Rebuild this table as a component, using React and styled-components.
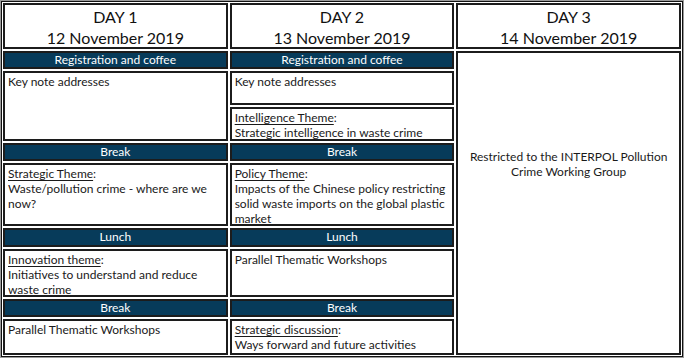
import React from "react";
import styled, { createGlobalStyle } from "styled-components";

const GlobalStyle = createGlobalStyle`
  html, body {
    margin: 0;
    padding: 0;
    background: #ffffff;
  }
  body {
    font-family: Lato, "Open Sans", "Liberation Sans", sans-serif;
    color: #1a1a1a;
  }
`;

const Frame = styled.div`
  width: 684px;
  height: 358px;
  box-sizing: border-box;
  border: 1px solid #9a9a9a;
`;

const Table = styled.div`
  height: 100%;
  box-sizing: border-box;
  border: 1px solid #111;
  padding: 1px;
  display: grid;
  grid-template-columns: 1fr 1fr 1fr;
  grid-template-rows: 46px 18px 34px 34px 18px 63px 19px 48px 18px 36px;
  gap: 2px;
`;

const Cell = styled.div`
  box-sizing: border-box;
  border: 2px solid #1c1c1c;
  background: #fff;
  font-size: 12px;
  line-height: 15px;
  padding: 1px 3px 0;
  overflow: hidden;
  grid-column: ${(p) => p.$col};
  grid-row: ${(p) => p.$row};
`;

const Header = styled(Cell)`
  text-align: center;
  font-size: 16px;
  line-height: 21px;
  color: #111;
`;

const Bar = styled(Cell)`
  background: #073b5a;
  color: #fff;
  text-align: center;
  font-size: 12px;
  line-height: 14px;
  padding: 0 4px;
`;

const Restricted = styled(Cell)`
  text-align: center;
  padding-top: 96px;
`;

const Label = styled.span`
  text-decoration: underline;
  text-underline-offset: 2px;
`;

const days = [
  { col: 1, day: "DAY 1", date: "12 November 2019" },
  { col: 2, day: "DAY 2", date: "13 November 2019" },
  { col: 3, day: "DAY 3", date: "14 November 2019" },
];

export default function App() {
  return (
    <>
      <GlobalStyle />
      <Frame>
        <Table>
          {days.map((d) => (
            <Header key={d.day} $col={d.col} $row={1}>
              {d.day}
              <br />
              {d.date}
            </Header>
          ))}

          <Bar $col={1} $row={2}>Registration and coffee</Bar>
          <Bar $col={2} $row={2}>Registration and coffee</Bar>
          <Restricted $col={3} $row="2 / 11">
            Restricted to the INTERPOL Pollution
            <br />
            Crime Working Group
          </Restricted>

          <Cell $col={1} $row="3 / 5">Key note addresses</Cell>
          <Cell $col={2} $row={3}>Key note addresses</Cell>
          <Cell $col={2} $row={4}>
            <Label>Intelligence Theme</Label>:
            <br />
            Strategic intelligence in waste crime
          </Cell>

          <Bar $col={1} $row={5}>Break</Bar>
          <Bar $col={2} $row={5}>Break</Bar>

          <Cell $col={1} $row={6}>
            <Label>Strategic Theme</Label>:
            <br />
            Waste/pollution crime - where are we now?
          </Cell>
          <Cell $col={2} $row={6}>
            <Label>Policy Theme</Label>:
            <br />
            Impacts of the Chinese policy restricting solid waste imports on the global plastic market
          </Cell>

          <Bar $col={1} $row={7}>Lunch</Bar>
          <Bar $col={2} $row={7}>Lunch</Bar>

          <Cell $col={1} $row={8}>
            <Label>Innovation theme</Label>:
            <br />
            Initiatives to understand and reduce waste crime
          </Cell>
          <Cell $col={2} $row={8}>Parallel Thematic Workshops</Cell>

          <Bar $col={1} $row={9}>Break</Bar>
          <Bar $col={2} $row={9}>Break</Bar>

          <Cell $col={1} $row={10}>Parallel Thematic Workshops</Cell>
          <Cell $col={2} $row={10}>
            <Label>Strategic discussion</Label>:
            <br />
            Ways forward and future activities
          </Cell>
        </Table>
      </Frame>
    </>
  );
}
